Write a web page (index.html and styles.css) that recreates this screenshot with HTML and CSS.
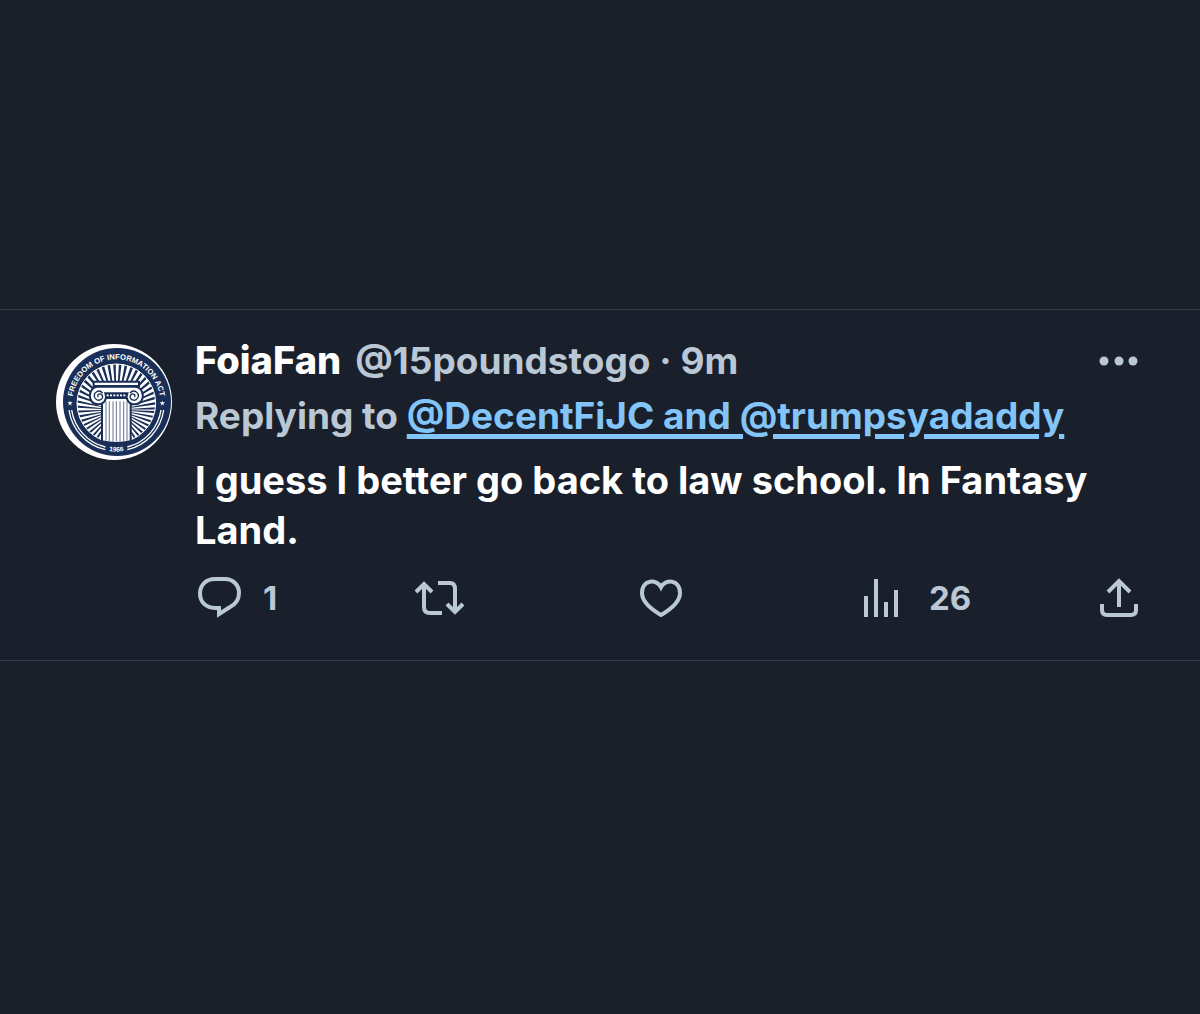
FILE: index.html
```html
<!DOCTYPE html>
<html lang="en">
<head>
    <meta charset="UTF-8">
    <meta name="viewport" content="width=device-width, initial-scale=1.0">
    <link rel="stylesheet" href="styles.css">
    <title>FoiaFan</title>
</head>
<body>
    <article class="post">
        <svg class="avatar" viewBox="18 18 348 348" role="img" aria-label="FoiaFan avatar">
            <defs>
                <clipPath id="disc"><circle cx="199" cy="196" r="118"/></clipPath>
                <path id="arc-top" d="M67 196a132 132 0 0 1 264 0"/>
                <path id="arc-bottom" d="M54 192a145 149 0 0 0 290 0"/>
            </defs>
            <circle cx="192" cy="192" r="174" fill="#fff"/>
            <circle cx="201" cy="192" r="162" fill="#1a2f57"/>
            <g clip-path="url(#disc)">
                <circle cx="199" cy="215" r="80" fill="none" stroke="#fff" stroke-width="160" pathLength="96" stroke-dasharray="1.1 .9" stroke-dashoffset=".55"/>
            </g>
            <circle cx="199" cy="196" r="118" fill="none" stroke="#fff" stroke-width="3"/>
            <g fill="none" stroke="#fff" stroke-width="4">
                <path d="M57 216a143 143 0 0 0 109 119"/>
                <path d="M65 216a135 135 0 0 0 101 111"/>
                <path d="M341 216a143 143 0 0 1-109 119"/>
                <path d="M333 216a135 135 0 0 1-101 111"/>
            </g>
            <path fill="#fff" d="m60 188 2 5 6 0-5 4 2 6-5-4-5 4 2-6-5-4 6 0zM337 188l2 5 6 0-5 4 2 6-5-4-5 4 2-6-5-4 6 0z"/>
            <g class="seal-text" fill="#fff" text-anchor="middle">
                <text font-size="23"><textPath href="#arc-top" startOffset="50%">FREEDOM OF INFORMATION ACT</textPath></text>
                <text font-size="20"><textPath href="#arc-bottom" startOffset="50%">1966</textPath></text>
            </g>
            <!-- column -->
            <g fill="#fff" stroke="#1a2f57" stroke-width="6">
                <path d="M156 180h86v130q-43 10-86 0z"/>
                <path d="M131 131h136v13H131z"/>
                <path d="M144 146h110c31 0 34 52 1 53-22 0-29-20-23-33h-66c6 13-1 33-23 33-33-1-30-53 1-53z"/>
            </g>
            <path fill="#1a2f57" d="M168 167h62v11h-62z"/>
            <g fill="none" stroke="#1a2f57">
                <path stroke-width="2" d="M168 190v118M178 190v120M189 190v121M199 190v121M210 190v121M221 190v120M231 190v118"/>
                <path stroke-width="4" d="M158 165c-12-14-31 1-23 15 9 14 29 2 21-9-7-8-17 1-11 6M240 165c12-14 31 1 23 15-9 14-29 2-21-9 7-8 17 1 11 6"/>
            </g>
            <path stroke="#fff" stroke-width="5" stroke-dasharray="6 4" d="M170 172h58"/>
        </svg>
        <div class="content">
            <header class="post-header">
                <strong class="name">FoiaFan</strong>
                <span class="handle">@15poundstogo · 9m</span>
                <button type="button" class="more" aria-label="More">
                    <svg width="40" height="10" viewBox="0 0 40 10"><circle cx="5" cy="5" r="4.500"/><circle cx="20" cy="5" r="4.500"/><circle cx="34" cy="5" r="4.500"/></svg>
                </button>
            </header>
            <p class="reply-to">Replying to <a href="#">@DecentFiJC and @trumpsyadaddy</a></p>
            <p class="text">I guess I better go back to law school. In Fantasy Land.</p>
            <div class="actions">
                <button type="button" class="action" aria-label="Reply, 1">
                    <svg width="48" height="44" viewBox="0 0 48 44"><path d="M20 3h10c8 0 14 6 14 14 0 6-3 11-9 14L24 38v-6h-4C11 32 5 26 5 17.500S11 3 20 3z"/></svg>
                    <span>1</span>
                </button>
                <button type="button" class="action" aria-label="Repost">
                    <svg width="48" height="44" viewBox="2 0 48 44"><path d="m1 16 8-8 8 8M9 9v22q0 6 6 6h12M23 7h12q5 0 5 6v22M32 28l8 8 8-8"/></svg>
                </button>
                <button type="button" class="action" aria-label="Like">
                    <svg width="48" height="44" viewBox="0 0 48 44"><path d="M22 11C18 3 3 3 3 17c0 8 7 15 19 22 12-7 19-14 19-22C41 3 26 3 22 11z"/></svg>
                </button>
                <button type="button" class="action" aria-label="Views, 26">
                    <svg width="48" height="44" viewBox="0 0 48 44"><path d="M5 41V20M15 41V3M25 41V26M35 41V14"/></svg>
                    <span>26</span>
                </button>
                <button type="button" class="action share" aria-label="Share">
                    <svg width="40" height="44" viewBox="0 0 40 44"><path d="M20 31V5M9 16 20 5l11 11M3 28v6q0 5 5 5h24q5 0 5-5v-6"/></svg>
                </button>
            </div>
        </div>
    </article>
</body>
</html>
```
FILE: styles.css
```css
* {
    margin: 0;
    padding: 0;
    box-sizing: border-box;
}
body {
    background-color: #1a2029;
    color: #bac7d5;
    font-family: Inter, "Liberation Sans", sans-serif;
    font-size: 37px;
    font-weight: 700;
    padding-top: 309px;
}
.post {
    display: flex;
    gap: 23px;
    padding: 23px 61px 40px 56px;
    background: #19202b;
    border-top: 1px solid #303d4d;
    border-bottom: 1px solid #303d4d;
}
.avatar {
    flex: none;
    width: 116px;
    height: 116px;
    margin-top: 11px;
}
.seal-text {
    font-family: "Liberation Sans", sans-serif;
    font-weight: bold;
}
.content {
    flex: 1;
    min-width: 0;
}
.post-header {
    display: flex;
    align-items: center;
    gap: 14px;
    line-height: 55px;
}
.name {
    color: #fff;
    font-size: 38px;
    font-weight: 800;
}
button {
    background: none;
    border: none;
    color: inherit;
    font: inherit;
    cursor: pointer;
}
.more {
    display: flex;
    margin-left: auto;
}
.more svg {
    fill: currentColor;
}
.reply-to {
    line-height: 55px;
}
.reply-to a {
    color: #83c5f8;
    text-decoration-thickness: 5px;
    text-underline-offset: 5px;
}
.text {
    margin-top: 12px;
    color: #fff;
    font-size: 38px;
    line-height: 50px;
}
.actions {
    display: grid;
    grid-template-columns: repeat(4, 1fr) 56px;
    margin-top: 21px;
}
.action {
    display: flex;
    align-items: center;
    gap: 20px;
    height: 44px;
    font-size: 33px;
}
.action svg {
    fill: none;
    stroke: currentColor;
    stroke-width: 4px;
    overflow: visible;
}
.share {
    justify-content: flex-end;
}
```
